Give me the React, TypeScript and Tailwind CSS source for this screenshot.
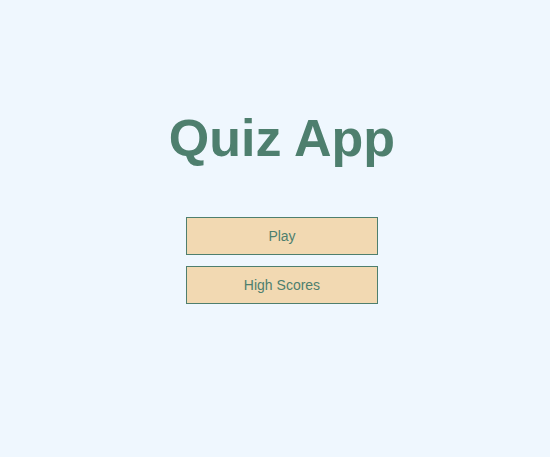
export default function App() {
  return (
    <div className="min-h-[457px] w-full bg-[#eff7fe] flex flex-col items-center pl-[14px] pt-[112px]" style={{ fontFamily: '"Liberation Sans", Arial, sans-serif' }}>
      <h1 className="text-[52px] leading-[52px] font-bold text-[#4e7f6e]">Quiz App</h1>
      <div className="mt-[53px] flex flex-col gap-[11px]">
        <button className="w-[192px] h-[38px] bg-[#f2d9b2] border border-[#4e7f6e] text-[#4e7f6e] text-[14px]">Play</button>
        <button className="w-[192px] h-[38px] bg-[#f2d9b2] border border-[#4e7f6e] text-[#4e7f6e] text-[14px]">High Scores</button>
      </div>
    </div>
  );
}
